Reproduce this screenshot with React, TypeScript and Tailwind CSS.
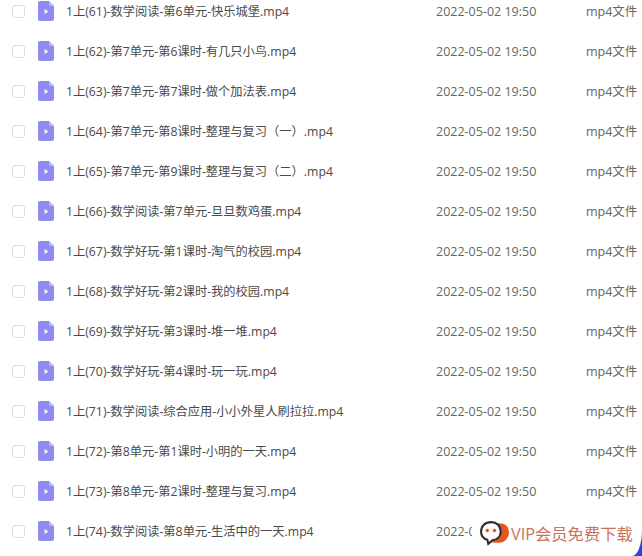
const rows = [
  '1上(61)-数学阅读-第6单元-快乐城堡.mp4',
  '1上(62)-第7单元-第6课时-有几只小鸟.mp4',
  '1上(63)-第7单元-第7课时-做个加法表.mp4',
  '1上(64)-第7单元-第8课时-整理与复习（一）.mp4',
  '1上(65)-第7单元-第9课时-整理与复习（二）.mp4',
  '1上(66)-数学阅读-第7单元-旦旦数鸡蛋.mp4',
  '1上(67)-数学好玩-第1课时-淘气的校园.mp4',
  '1上(68)-数学好玩-第2课时-我的校园.mp4',
  '1上(69)-数学好玩-第3课时-堆一堆.mp4',
  '1上(70)-数学好玩-第4课时-玩一玩.mp4',
  '1上(71)-数学阅读-综合应用-小小外星人刷拉拉.mp4',
  '1上(72)-第8单元-第1课时-小明的一天.mp4',
  '1上(73)-第8单元-第2课时-整理与复习.mp4',
  '1上(74)-数学阅读-第8单元-生活中的一天.mp4',
];

function FileIcon() {
  return (
    <svg width="16" height="20" viewBox="0 0 16 20" className="shrink-0">
      <path d="M2 0H11L16 5V18a2 2 0 0 1-2 2H2a2 2 0 0 1-2-2V2a2 2 0 0 1 2-2Z" fill="#8f8bef" />
      <path d="M11 0L16 5H12.500a1.500 1.500 0 0 1-1.500-1.500Z" fill="#bcb9f6" />
      <path d="M6.500 8L10.500 10.500L6.500 13Z" fill="#f4f3ff" />
    </svg>
  );
}

function Row({ name }: { name: string }) {
  return (
    <div className="flex h-10 items-center">
      <div className="ml-3 h-[13px] w-[13px] shrink-0 rounded-[3px] border border-[#dcdcdc] bg-white" />
      <div className="ml-[13px]">
        <FileIcon />
      </div>
      <div className="ml-3 w-[370px] shrink-0 truncate pt-[2px] text-[12.25px] text-[#4a4a4a]">{name}</div>
      <div className="w-[150px] shrink-0 pt-[2px] text-[12.5px] text-[#666]">2022-05-02 19:50</div>
      <div className="shrink-0 whitespace-nowrap pt-[2px] text-[12.5px] text-[#666]">mp4文件</div>
    </div>
  );
}

export default function App() {
  return (
    <div className="relative h-[556px] w-[642px] overflow-hidden bg-white font-['Open_Sans','Noto_Sans_CJK_SC',sans-serif]">
      <div className="mt-[-9px]">
        {rows.map((name) => (
          <Row key={name} name={name} />
        ))}
      </div>
      {/* watermark over the last row, blue sliver shows in the corner */}
      <div className="absolute bottom-0 right-0 h-[30px] w-[14px] bg-[#2f45d6]" />
      <div className="absolute bottom-0 left-[472px] flex h-[38px] w-[170px] items-center rounded-br-[10px_26px] bg-white pb-[8px] pl-[7px]">
        <svg width="31" height="29" viewBox="0 0 30 28" className="shrink-0">
          <path d="M13 4h7c6 0 9 4 9 9s-4 10-10 10h-6Z" fill="#e2571e" />
          <path d="M12 3C6 3 2 6.500 2 12c0 4 2.500 7 6 8l1 4 4-3.500C18 20 21 16.500 21 12c0-5-4-9-9-9Z" fill="#fff" stroke="#2b2b2b" strokeWidth="2" />
          <circle cx="8" cy="11" r="1.700" fill="#e2571e" />
          <circle cx="15" cy="11" r="1.700" fill="#e2571e" />
        </svg>
        <span className="ml-[1px] mt-[3px] whitespace-nowrap text-[16.3px] text-[#c9735a]">VIP会员免费下载</span>
      </div>
    </div>
  );
}
